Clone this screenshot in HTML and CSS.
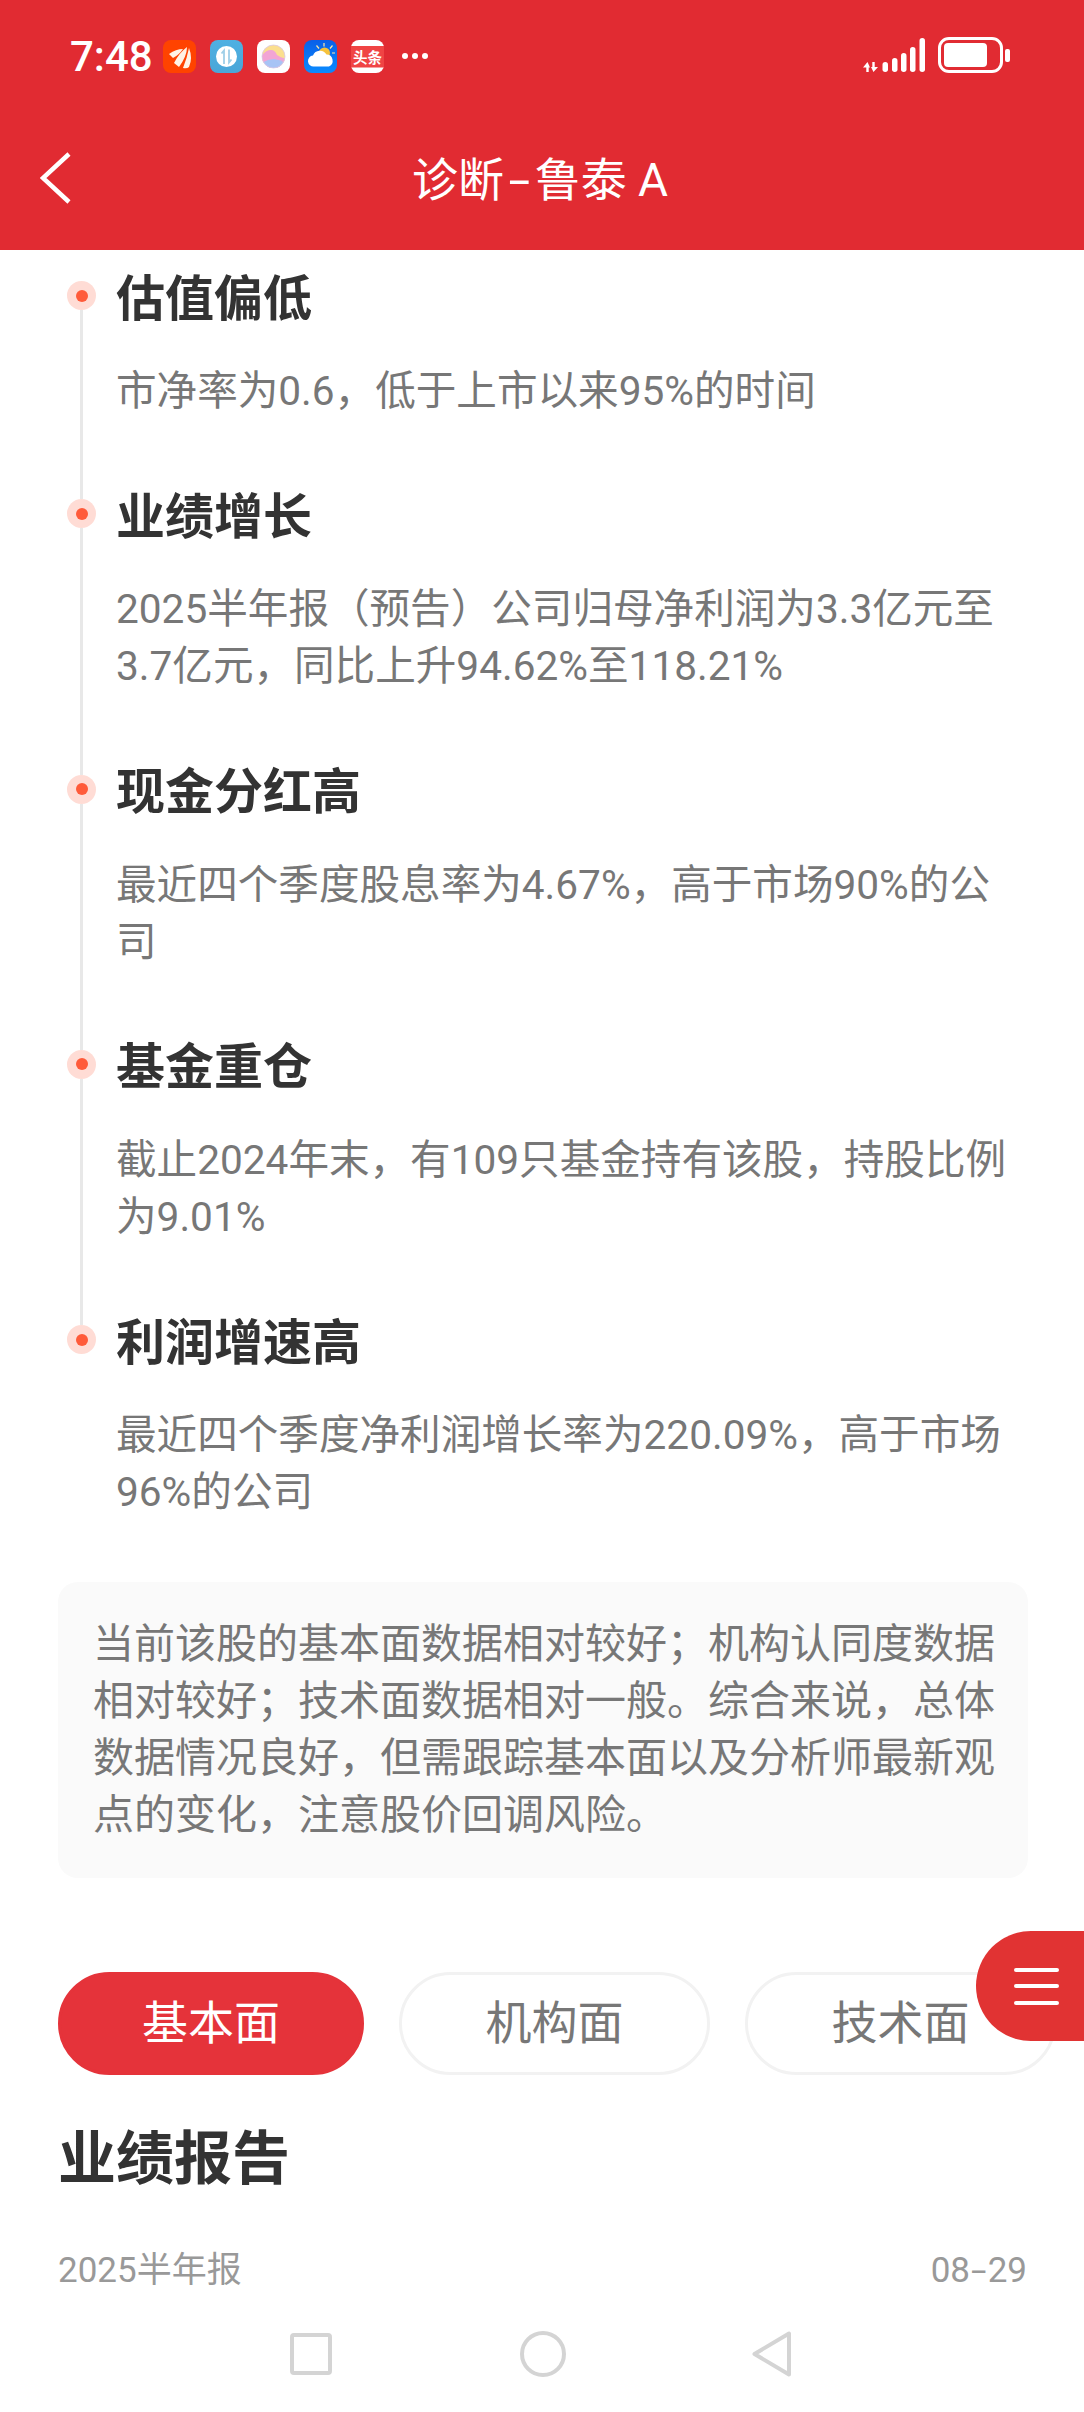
FILE: index.html
```html
<!DOCTYPE html>
<html lang="zh">
<head>
<meta charset="utf-8">
<title>诊断-鲁泰 A</title>
<link rel="stylesheet" href="styles.css">
</head>
<body>
<div class="page">
  <header class="header">
    <div class="status">
      <span class="time">7:48</span>
      <div class="apps">
        <svg class="app" viewBox="0 0 33 33"><rect width="33" height="33" rx="8" fill="#ff4300"/><path d="M6 14 Q13 9 20 9 Q16 15 10 18Z M11 23 Q16 13 24 7 Q24 16 16 27Z M20 28 Q24 18 26 8 Q30 18 26 27Q24 29 20 28Z" fill="#fff3e6"/></svg>
        <svg class="app" viewBox="0 0 33 33"><defs><linearGradient id="g2" x1="0" y1="0" x2="0" y2="1"><stop offset="0" stop-color="#4fb0e2"/><stop offset="1" stop-color="#4aa6d8"/></linearGradient></defs><rect width="33" height="33" rx="8" fill="url(#g2)"/><circle cx="16.500" cy="16.500" r="10.500" fill="#fff"/><path d="M14 24V10.500L11.500 13.500M19 9.500V22.500L21.500 19.500" fill="none" stroke="#9fcfe8" stroke-width="1.800"/></svg>
        <svg class="app" viewBox="0 0 33 33"><defs><clipPath id="c3"><circle cx="16.500" cy="16.500" r="11.500"/></clipPath></defs><rect width="33" height="33" rx="8" fill="#fff"/><g clip-path="url(#c3)"><rect width="33" height="33" fill="#fbdf8f"/><path d="M3 18 Q8 10 14 10 Q18 10 20 15 Q24 18 30 19 V33 H3Z" fill="#f2a5d4"/><path d="M3 24 Q10 19 17 19 Q24 20 30 24 V33 H3Z" fill="#a8c4f5"/></g><circle cx="16.500" cy="16.500" r="11.500" fill="none" stroke="#d9c8e6" stroke-width="0.800"/></svg>
        <svg class="app" viewBox="0 0 33 33"><defs><linearGradient id="g4" x1="0" y1="0" x2="0" y2="1"><stop offset="0" stop-color="#0a5fe8"/><stop offset="1" stop-color="#0a8bff"/></linearGradient></defs><rect width="33" height="33" rx="8" fill="url(#g4)"/><circle cx="20.500" cy="13" r="5.500" fill="#f6c23c"/><path d="M20 3v3.500M12.500 5.500l2.500 3M28.500 5.500l-2.500 3M31 13h-3" stroke="#ffe9a8" stroke-width="1.200"/><path d="M10 26.500a5.500 5.500 0 0 1-1-11 7.500 7.500 0 0 1 13.500-1 6.300 6.300 0 0 1 2.500 12Z" fill="#fff"/></svg>
        <svg class="app" viewBox="0 0 33 33"><rect width="33" height="33" rx="8" fill="#fff"/><rect y="6" width="33" height="21.500" fill="#f04444"/><text x="16.500" y="22.500" class="app-text">头条</text></svg>
      </div>
      <span class="more"><i></i><i></i><i></i></span>
      <div class="sys">
        <svg class="signal" viewBox="0 0 62 34"><path d="M4.500 34V27M10.500 24V31" stroke="#fff" stroke-width="2.400"/><path d="M0 29.500L4.500 24L7 29.500ZM8 29L10.500 34L15 29Z" fill="#fff"/><g fill="#fff"><rect x="19.500" y="24" width="5.500" height="10" rx="2.700"/><rect x="29" y="20" width="5.500" height="14" rx="2.700"/><rect x="38" y="15" width="5.500" height="19" rx="2.700"/><rect x="47" y="9" width="5.500" height="25" rx="2.700"/><rect x="56.500" y="0" width="5.500" height="34" rx="2.700"/></g></svg>
        <div class="battery"><div class="battery-body"><div class="battery-fill"></div></div><div class="battery-nub"></div></div>
      </div>
    </div>
    <div class="navbar">
      <svg class="back" viewBox="0 0 32 52"><path d="M29 2 L3 26 L29 50" fill="none" stroke="#fff" stroke-width="4.500"/></svg>
      <h1 class="title">诊断<span class="dash dash-title">-</span>鲁泰 A</h1>
    </div>
  </header>

  <main class="content">
    <ul class="timeline">
      <li class="item">
        <div class="marker"><span class="dot"></span><span class="line"></span></div>
        <div class="body"><h3 class="item-title">估值偏低</h3><p class="item-desc">市净率为0.6，低于上市以来95%的时间</p></div>
      </li>
      <li class="item">
        <div class="marker"><span class="dot"></span><span class="line"></span></div>
        <div class="body"><h3 class="item-title">业绩增长</h3><p class="item-desc">2025半年报（预告）公司归母净利润为3.3亿元至3.7亿元，同比上升94.62%至118.21%</p></div>
      </li>
      <li class="item">
        <div class="marker"><span class="dot"></span><span class="line"></span></div>
        <div class="body"><h3 class="item-title">现金分红高</h3><p class="item-desc">最近四个季度股息率为4.67%，高于市场90%的公司</p></div>
      </li>
      <li class="item">
        <div class="marker"><span class="dot"></span><span class="line"></span></div>
        <div class="body"><h3 class="item-title">基金重仓</h3><p class="item-desc">截止2024年末，有109只基金持有该股，持股比例为9.01%</p></div>
      </li>
      <li class="item item-last">
        <div class="marker"><span class="dot"></span></div>
        <div class="body"><h3 class="item-title">利润增速高</h3><p class="item-desc">最近四个季度净利润增长率为220.09%，高于市场96%的公司</p></div>
      </li>
    </ul>

    <div class="summary">当前该股的基本面数据相对较好；机构认同度数据相对较好；技术面数据相对一般。综合来说，总体数据情况良好，但需跟踪基本面以及分析师最新观点的变化，注意股价回调风险。</div>

    <div class="tabs">
      <div class="tab tab-active">基本面</div>
      <div class="tab">机构面</div>
      <div class="tab">技术面</div>
    </div>

    <h2 class="section">业绩报告</h2>
    <div class="report"><span>2025半年报</span><span>08<span class="dash">-</span>29</span></div>
  </main>

  <nav class="sysnav">
    <svg class="nav-square" viewBox="0 0 42 42"><rect x="2" y="2" width="38" height="38" rx="2" fill="none" stroke="#d4d4d4" stroke-width="4"/></svg>
    <svg class="nav-circle" viewBox="0 0 46 46"><circle cx="23" cy="23" r="21" fill="none" stroke="#d4d4d4" stroke-width="4"/></svg>
    <svg class="nav-tri" viewBox="0 0 40 46"><path d="M37 2.500 V43.500 L2.500 23Z" fill="none" stroke="#d4d4d4" stroke-width="4" stroke-linejoin="round"/></svg>
  </nav>

  <button class="fab" aria-label="菜单"><span></span><span></span><span></span></button>
</div>
</body>
</html>
```

FILE: styles.css
```css
* { box-sizing: border-box; }
html, body { margin: 0; padding: 0; background: #fff; }
body { font-family: Roboto, "Noto Sans CJK SC", sans-serif; }
.page { position: relative; width: 1084px; height: 2412px; display: flex; flex-direction: column; overflow: hidden; }

.header { height: 250px; background: #e12b32; color: #fff; flex: none; }
.status { height: 111px; display: flex; align-items: flex-start; padding: 37px 74px 0 70px; }
.time { font-size: 42px; font-weight: 500; line-height: 40px; width: 93px; }
.apps { display: flex; gap: 14px; margin-top: 3px; }
.app { width: 33px; height: 33px; display: block; }
.app-text { font-size: 14.500px; font-weight: 700; fill: #fff; text-anchor: middle; font-family: "Noto Sans CJK SC", sans-serif; }
.more { display: flex; gap: 4px; margin: 16px 0 0 18px; }
.more i { width: 6px; height: 6px; border-radius: 50%; background: #fff; }
.sys { margin-left: auto; display: flex; gap: 13px; align-items: flex-start; }
.signal { width: 62px; height: 34px; display: block; margin-top: 1px; }
.battery { display: flex; align-items: center; gap: 2px; }
.battery-body { width: 65px; height: 36px; border: 3px solid #fff; border-radius: 11px; padding: 3px; }
.battery-fill { width: 43px; height: 100%; background: #fff; border-radius: 4px; }
.battery-nub { width: 5px; height: 13px; background: #fff; border-radius: 2px; }

.navbar { position: relative; height: 139px; display: flex; align-items: center; justify-content: center; padding: 0 4px 2px 0; }
.back { position: absolute; left: 40px; top: 41px; width: 32px; height: 52px; }
.title { margin: 0; font-size: 46px; font-weight: 400; line-height: 60px; }
.dash { display: inline-block; padding: 0 4px; transform: scaleX(1.600); }
.dash-title { padding: 0 9px; transform: scaleX(1.700); }

.content { flex: 1; min-height: 0; overflow: hidden; }
.timeline { list-style: none; margin: 0; padding: 31px 0 0 67px; }
.item { display: flex; gap: 20px; padding-right: 57px; }
.marker { width: 29px; flex: none; display: flex; flex-direction: column; align-items: center; }
.dot { width: 29px; height: 29px; border-radius: 50%; background: #ffdcd5; display: flex; align-items: center; justify-content: center; flex: none; }
.dot::after { content: ""; width: 12px; height: 12px; border-radius: 50%; background: #ff5b3a; }
.line { width: 3px; flex: 1; background: #e8e8e8; }
.body { margin-top: -13.500px; padding-bottom: 79.250px; min-width: 0; flex: 1; }
.item-last .body { padding-bottom: 61px; }
.item-title { margin: 0; font-size: 49px; font-weight: 700; line-height: 64px; color: #333; }
.item-desc { margin: 31.500px 0 0; font-size: 40.600px; line-height: 57px; color: #777; }

.summary { margin: 0 56px 0 58px; padding: 34px 33px 34px 35px; background: #fafafa; border-radius: 20px; font-size: 41px; line-height: 57px; color: #777; }

.tabs { display: flex; gap: 35px; margin: 94px 0 0 58px; }
.tab { width: 311px; height: 103px; border: 3px solid #f2f2f2; border-radius: 52px; display: flex; align-items: center; justify-content: center; padding-bottom: 10px; font-size: 46px; color: #777; }
.tab-active { width: 306px; background: #e5333a; border-color: #e5333a; color: #fff; }

.section { margin: 49px 0 0 58px; font-size: 58px; font-weight: 700; line-height: 70px; color: #333; }
.report { display: flex; justify-content: space-between; margin: 54px 57px 0 58px; font-size: 35px; line-height: 46px; color: #999; }

.sysnav { height: 112px; flex: none; position: relative; display: flex; align-items: flex-start; padding: 31px 0 0 290px; background: #fff; }
.nav-square { width: 42px; height: 42px; margin-top: 2px; }
.nav-circle { width: 46px; height: 46px; margin-left: 188px; }
.nav-tri { width: 40px; height: 46px; margin-left: 186px; }

.fab { position: absolute; left: 976px; top: 1931px; width: 108px; height: 110px; border: 0; padding: 0 25px 0 38px; background: #e13333; border-radius: 55px 0 0 55px; display: flex; flex-direction: column; justify-content: center; gap: 12.500px; }
.fab span { display: block; height: 4px; border-radius: 2px; background: #fff; }
```
